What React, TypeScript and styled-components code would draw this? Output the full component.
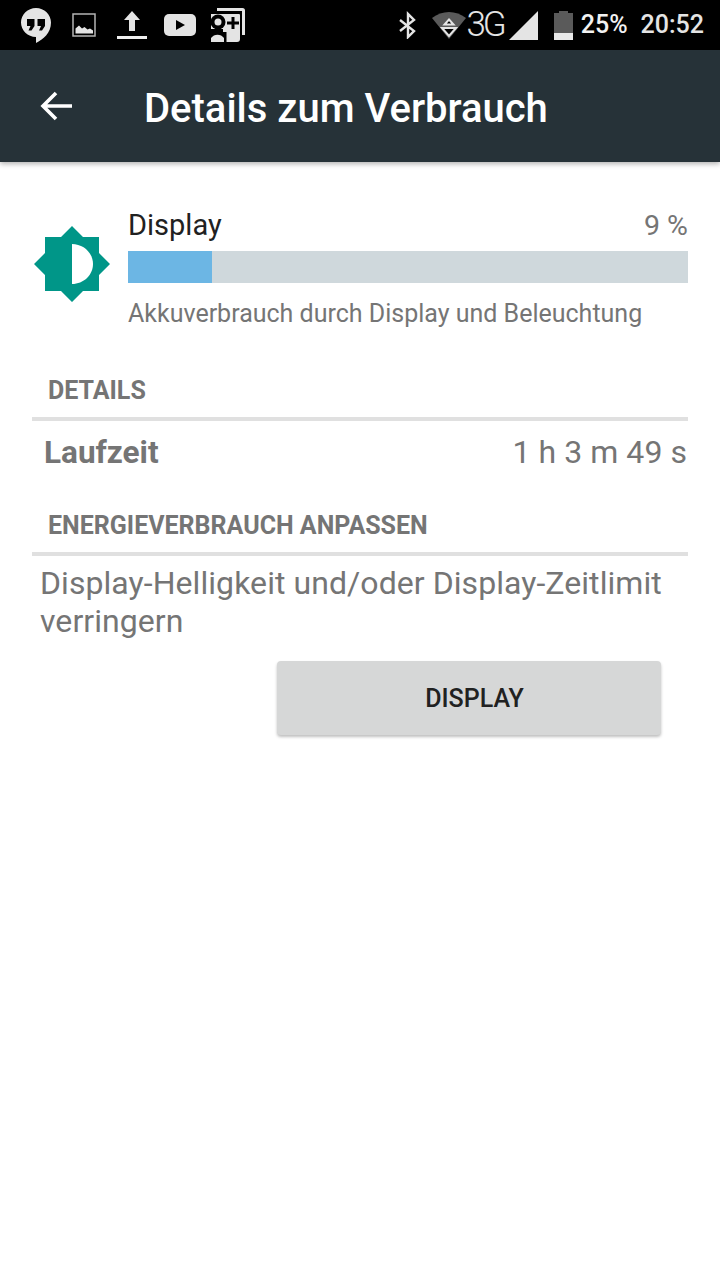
import { createGlobalStyle, styled } from 'styled-components'

const Global = createGlobalStyle`
  html, body { margin: 0; padding: 0; background: #fff; }
  body { font-family: Roboto, "Liberation Sans", sans-serif; }
  * { box-sizing: border-box; }
`

const Page = styled.div`
  width: 720px;
  height: 1280px;
  overflow: hidden;
  background: #fff;
`

const StatusBar = styled.div`
  height: 50px;
  background: #000;
  display: flex;
  align-items: center;
  justify-content: space-between;
  padding: 0 16px 0 20px;
`

const IconGroup = styled.div`
  display: flex;
  align-items: center;
`

const StatusIcon = styled.svg<{ $ml?: number }>`
  display: block;
  margin-left: ${p => p.$ml ?? 0}px;
`

const NetworkLabel = styled.span`
  font-size: 35px;
  font-weight: 300;
  color: #e4e4e4;
  letter-spacing: -3px;
  line-height: 50px;
`

const Percent = styled.span`
  font-size: 25px;
  font-weight: 500;
  color: #f2f2f2;
  margin-left: 8px;
  line-height: 50px;
`

const Clock = styled.span`
  font-size: 25px;
  font-weight: 500;
  color: #e4e4e4;
  margin-left: 13px;
  line-height: 50px;
`

const AppBar = styled.div`
  height: 112px;
  background: #263238;
  display: flex;
  align-items: center;
  padding-left: 40px;
  box-shadow: 0 2px 5px rgba(0, 0, 0, 0.3);
  position: relative;
`

const Title = styled.div`
  color: #fff;
  font-size: 40px;
  font-weight: 500;
  margin: 4px 0 0 70px;
`

const Content = styled.div`
  padding: 44px 32px 0;
`

const Summary = styled.div`
  display: flex;
  align-items: flex-start;
`

const SummaryIcon = styled.svg`
  flex-shrink: 0;
  display: block;
  margin: 20px 18px 0 2px;
`

const SummaryBody = styled.div`
  flex: 1;
  min-width: 0;
`

const SummaryHead = styled.div`
  display: flex;
  justify-content: space-between;
  align-items: center;
  height: 38px;
`

const SummaryTitle = styled.span`
  font-size: 29px;
  color: #212121;
`

const SummaryValue = styled.span`
  font-size: 28.5px;
  color: #757575;
`

const Track = styled.div`
  height: 32px;
  margin-top: 7px;
  background: #cfd8dc;
`

const Fill = styled.div`
  height: 100%;
  background: #6cb6e4;
`

const SummaryText = styled.div`
  font-size: 25px;
  color: #757575;
  margin-top: 15px;
  line-height: 32px;
`

const SectionHead = styled.div<{ $top: number }>`
  margin-top: ${p => p.$top}px;
  height: 48px;
  padding-left: 16px;
  font-size: 25px;
  font-weight: 700;
  color: #757575;
  line-height: 36px;
  border-bottom: 4px solid #e0e0e0;
`

const InfoRow = styled.div`
  display: flex;
  justify-content: space-between;
  align-items: center;
  height: 62px;
  padding: 0 1px 0 12px;
  color: #757575;
`

const InfoLabel = styled.span`
  font-size: 31.5px;
  font-weight: 700;
`

const InfoValue = styled.span`
  font-size: 32px;
  letter-spacing: 0.05px;
`

const Advice = styled.div`
  font-size: 32px;
  line-height: 38px;
  letter-spacing: 0.06px;
  color: #757575;
  padding: 8px 8px 0;
`

const ActionRow = styled.div`
  display: flex;
  justify-content: flex-end;
  padding: 21px 27px 0 0;
`

const ActionButton = styled.button`
  width: 384px;
  height: 74px;
  border: 0;
  border-radius: 4px;
  background: #d6d7d7;
  box-shadow: 0 2px 3px rgba(0, 0, 0, 0.25);
  color: #212121;
  font-family: inherit;
  font-size: 25px;
  font-weight: 500;
  padding: 0 0 0 11px;
`

export default function App() {
  return (
    <Page>
      <Global />
      <StatusBar>
        <IconGroup>
          <StatusIcon width="32" height="36" viewBox="0 0 32 36">
            <path d="M16 1C7.700 1 1 7.700 1 15.500S7.700 30 16 30v6c7-3.500 15-10 15-20.500C31 7.700 24.300 1 16 1z" fill="#e4e4e4" />
            <path d="M7 12h7.500v7l-3 4.500H8.500l2-4.500H7zM17.500 12H25v7l-3 4.500h-3l2-4.500h-3.500z" fill="#000" />
          </StatusIcon>
          <StatusIcon $ml={20} width="24" height="24" viewBox="0 0 24 24">
            <rect x="1" y="1" width="22" height="22" fill="none" stroke="#b4b4b4" strokeWidth="1.500" />
            <path d="M3.500 20.500v-5l3.500-3 3 3 2.500-1.500 3 2.500 2.500-1 3 2v3z" fill="#e4e4e4" />
          </StatusIcon>
          <StatusIcon $ml={21} width="30" height="28" viewBox="0 0 30 28">
            <path d="M15 0l8 9h-5v11h-6V9H7z" fill="#e4e4e4" />
            <rect y="25" width="30" height="3" fill="#efefef" />
          </StatusIcon>
          <StatusIcon $ml={17} width="32" height="22" viewBox="0 0 32 22">
            <rect width="32" height="22" rx="5" fill="#e4e4e4" />
            <path d="M12 6l9 5-9 5z" fill="#000" />
          </StatusIcon>
          <StatusIcon $ml={15} width="34" height="34" viewBox="0 0 34 34">
            <path d="M6 1.500h25.500a1 1 0 0 1 1 1V27" fill="none" stroke="#e4e4e4" strokeWidth="3" />
            <path d="M0 6h28a1 1 0 0 1 1 1v24a3 3 0 0 1-3 3H0z" fill="#e4e4e4" />
            <path d="M20.500 9h3v4.500H28v3h-4.500V21h-3v-4.500H16v-3h4.500z" fill="#000" />
            <circle cx="7" cy="14" r="7.500" fill="#000" />
            <circle cx="7" cy="14" r="3.500" fill="#e4e4e4" />
            <path d="M0 21h12v3h3.500v10H0z" fill="#000" />
            <path d="M0 34v-4c3-4.500 10-4.500 13 0v4z" fill="#e4e4e4" />
          </StatusIcon>
        </IconGroup>
        <IconGroup>
          <StatusIcon width="20" height="28" viewBox="0 0 20 28">
            <path d="M2 9l14 11-6 6V3l6 6L2 20" fill="none" stroke="#e4e4e4" strokeWidth="2.400" />
          </StatusIcon>
          <StatusIcon $ml={14} width="34" height="28" viewBox="0 0 34 28">
            <path d="M0 7C5 3 11 1 17 1s12 2 17 6L17 28z" fill="#5a5a5a" />
            <path d="M17 8.500l4.500 5h-9z" fill="#000" stroke="#e4e4e4" strokeWidth="2" />
            <path d="M10 17h14l-7 8z" fill="#000" stroke="#e4e4e4" strokeWidth="2" />
          </StatusIcon>
          <NetworkLabel>3G</NetworkLabel>
          <StatusIcon $ml={5} width="29" height="29" viewBox="0 0 29 29">
            <path d="M29 0v29H0z" fill="#e4e4e4" />
          </StatusIcon>
          <StatusIcon $ml={16} width="19" height="29" viewBox="0 0 19 29">
            <path d="M5 0h9v2h5v27H0V2h5z" fill="#5a5a5a" />
            <path d="M0 22h19v7H0z" fill="#e8e8e8" />
          </StatusIcon>
          <Percent>25%</Percent>
          <Clock>20:52</Clock>
        </IconGroup>
      </StatusBar>
      <AppBar>
        <svg width="34" height="30" viewBox="0 0 34 30" style={{ display: 'block' }}>
          <path d="M32 15H4M16 2L3 15l13 13" fill="none" stroke="#fff" strokeWidth="3.600" />
        </svg>
        <Title>Details zum Verbrauch</Title>
      </AppBar>
      <Content>
        <Summary>
          <SummaryIcon width="76" height="76" viewBox="0 0 76 76">
            <path d="M38 0l11 11h16v16l11 11-11 11v16H49L38 76 27 65H11V49L0 38l11-11V11h16z" fill="#009688" />
            <path d="M38 18c11.500 0 21 9 21 20s-9.500 20-21 20z" fill="#fff" />
          </SummaryIcon>
          <SummaryBody>
            <SummaryHead>
              <SummaryTitle>Display</SummaryTitle>
              <SummaryValue>9 %</SummaryValue>
            </SummaryHead>
            <Track>
              <Fill style={{ width: `${(84 / 560) * 100}%` }} />
            </Track>
            <SummaryText>Akkuverbrauch durch Display und Beleuchtung</SummaryText>
          </SummaryBody>
        </Summary>
        <SectionHead $top={43}>DETAILS</SectionHead>
        <InfoRow>
          <InfoLabel>Laufzeit</InfoLabel>
          <InfoValue>1 h 3 m 49 s</InfoValue>
        </InfoRow>
        <SectionHead $top={25}>ENERGIEVERBRAUCH ANPASSEN</SectionHead>
        <Advice>Display-Helligkeit und/oder Display-Zeitlimit verringern</Advice>
        <ActionRow>
          <ActionButton>DISPLAY</ActionButton>
        </ActionRow>
      </Content>
    </Page>
  )
}
